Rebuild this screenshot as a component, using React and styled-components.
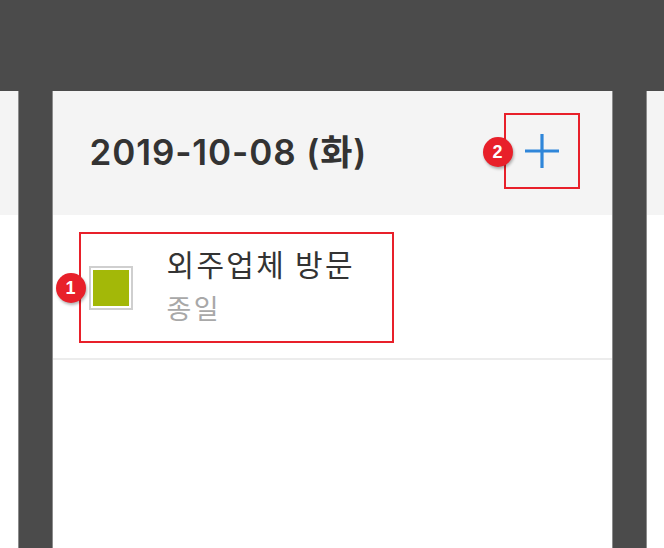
import React from "react";
import styled, { createGlobalStyle } from "styled-components";

const color = {
  dark: "#4b4b4b",
  edge: "#8c8c8c",
  light: "#f4f4f4",
  line: "#ececec",
  text: "#333333",
  muted: "#a8a8a8",
  blue: "#2f86d9",
  red: "#e8202a",
  green: "#a3b808",
};

const GlobalStyle = createGlobalStyle`
  html, body {
    margin: 0;
    padding: 0;
    background: #ffffff;
    font-family: Inter, "Noto Sans CJK KR", "Noto Sans", sans-serif;
  }
`;

const Page = styled.div`
  width: 664px;
  height: 548px;
  display: flex;
  flex-direction: column;
  overflow: hidden;
`;

const TopBand = styled.div`
  height: 91px;
  background: ${color.dark};
  flex-shrink: 0;
`;

const Body = styled.div`
  flex: 1;
  display: flex;
`;

const Side = styled.div`
  flex: 1;
  display: flex;
  flex-direction: column;
`;

const SideHeader = styled.div`
  height: 124px;
  background: ${color.light};
`;

const Bar = styled.div`
  width: 33px;
  background: ${color.dark};
  border-left: 1px solid ${color.edge};
  border-right: 1px solid ${color.edge};
`;

const Panel = styled.div`
  width: 559px;
  background: #ffffff;
  display: flex;
  flex-direction: column;
`;

const Header = styled.div`
  height: 124px;
  background: ${color.light};
  display: flex;
  align-items: center;
  justify-content: space-between;
  padding: 0 32px 0 37px;
  box-sizing: border-box;
`;

const DateTitle = styled.h1`
  margin: 0;
  font-size: 35px;
  font-weight: 600;
  color: ${color.text};
  letter-spacing: 0.9px;
  line-height: 40px;
  margin-bottom: 2px;
`;

const Highlight = styled.div`
  position: relative;
  border: 2px solid ${color.red};
  box-sizing: border-box;
`;

const AddBox = styled(Highlight)`
  width: 76px;
  height: 76px;
  display: flex;
  align-items: center;
  justify-content: center;
  margin-bottom: 4px;
`;

const Badge = styled.span`
  position: absolute;
  left: ${(p) => p.left}px;
  top: ${(p) => p.top}px;
  width: 30px;
  height: 30px;
  border-radius: 50%;
  background: ${color.red};
  color: #ffffff;
  font-family: "Liberation Sans", Arial, sans-serif;
  font-weight: 700;
  font-size: 18px;
  display: flex;
  align-items: center;
  justify-content: center;
  box-shadow: 1px 2px 3px rgba(0, 0, 0, 0.3);
`;

const EventRow = styled.div`
  height: 145px;
  border-bottom: 2px solid ${color.line};
  box-sizing: border-box;
  padding: 17px 0 0 26px;
`;

const EventBox = styled(Highlight)`
  width: 315px;
  height: 111px;
  display: flex;
  align-items: center;
  padding-left: 8px;
`;

const Swatch = styled.span`
  width: 44px;
  height: 44px;
  box-sizing: border-box;
  border: 2px solid #cfcfcf;
  padding: 2px;
  display: block;
  &::after {
    content: "";
    display: block;
    width: 100%;
    height: 100%;
    background: ${(p) => p.fill};
  }
`;

const EventText = styled.div`
  margin-left: 34px;
  display: flex;
  flex-direction: column;
  margin-top: -6px;
  font-family: "Noto Sans CJK KR", sans-serif;
`;

const EventTitle = styled.div`
  font-size: 30px;
  color: ${color.text};
  line-height: 40px;
  letter-spacing: 2.3px;
`;

const EventTime = styled.div`
  font-size: 27px;
  color: ${color.muted};
  line-height: 36px;
  margin-top: 7px;
  letter-spacing: 2.5px;
`;

function PlusIcon() {
  return (
    <svg width="38" height="38" viewBox="0 0 38 38">
      <path d="M19 2V36M2 19H36" stroke={color.blue} strokeWidth="3.2" />
    </svg>
  );
}

export default function App() {
  return (
    <Page>
      <GlobalStyle />
      <TopBand />
      <Body>
        <Side>
          <SideHeader />
        </Side>
        <Bar />
        <Panel>
          <Header>
            <DateTitle>2019-10-08 (화)</DateTitle>
            <AddBox>
              <Badge left={-23} top={22}>2</Badge>
              <PlusIcon />
            </AddBox>
          </Header>
          <EventRow>
            <EventBox>
              <Badge left={-25} top={39}>1</Badge>
              <Swatch fill={color.green} />
              <EventText>
                <EventTitle>외주업체 방문</EventTitle>
                <EventTime>종일</EventTime>
              </EventText>
            </EventBox>
          </EventRow>
        </Panel>
        <Bar />
        <Side>
          <SideHeader />
        </Side>
      </Body>
    </Page>
  );
}
